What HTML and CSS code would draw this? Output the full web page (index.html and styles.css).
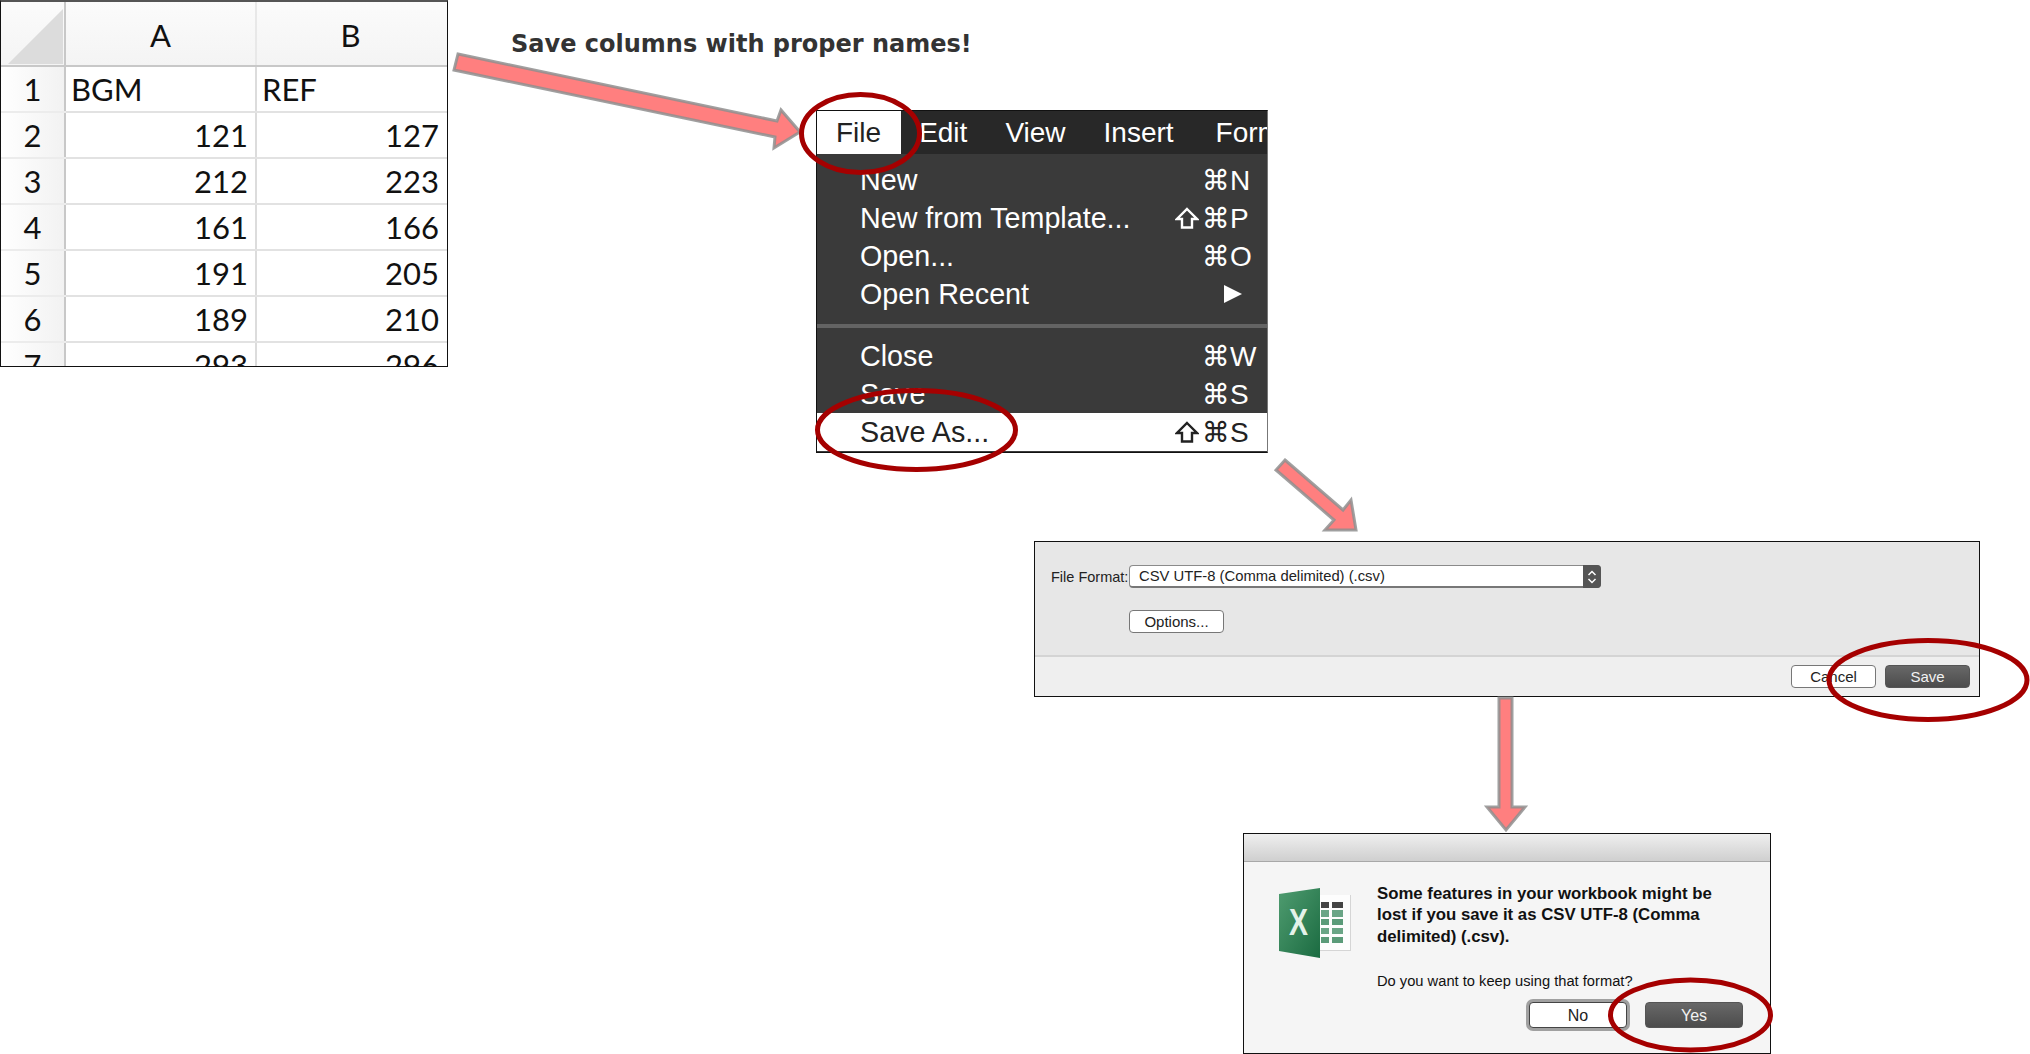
FILE: index.html
```html
<!DOCTYPE html>
<html lang="en">
<head>
    <meta charset="UTF-8">
    <meta name="viewport" content="width=device-width, initial-scale=1.0">
    <title>Save columns with proper names</title>
    <link rel="stylesheet" href="styles.css">
</head>

<body>
<div class="canvas">

    <!-- spreadsheet screenshot -->
    <div class="sheet">
        <table>
            <thead>
                <tr>
                    <th class="corner"><span class="corner-mark"></span></th>
                    <th>A</th>
                    <th>B</th>
                </tr>
            </thead>
            <tbody>
                <tr><th>1</th><td class="label">BGM</td><td class="label">REF</td></tr>
                <tr><th>2</th><td>121</td><td>127</td></tr>
                <tr><th>3</th><td>212</td><td>223</td></tr>
                <tr><th>4</th><td>161</td><td>166</td></tr>
                <tr><th>5</th><td>191</td><td>205</td></tr>
                <tr><th>6</th><td>189</td><td>210</td></tr>
                <tr><th>7</th><td>293</td><td>296</td></tr>
            </tbody>
        </table>
    </div>

    <p class="note">Save columns with proper names!</p>

    <!-- file menu screenshot -->
    <div class="menu">
        <div class="menu-bar">
            <span class="menu-tab active">File</span>
            <span class="menu-tab">Edit</span>
            <span class="menu-tab">View</span>
            <span class="menu-tab">Insert</span>
            <span class="menu-tab">Format</span>
        </div>
        <ul class="menu-list">
            <li class="menu-item"><span class="item-name">New</span><span class="item-keys">⌘N</span></li>
            <li class="menu-item">
                <span class="item-name">New from Template...</span>
                <svg class="item-shift" width="24" height="22" viewBox="0 0 24 22"><path d="M12 2 22 12H17V20.500H7V12H2Z"/></svg>
                <span class="item-keys">⌘P</span>
            </li>
            <li class="menu-item"><span class="item-name">Open...</span><span class="item-keys">⌘O</span></li>
            <li class="menu-item"><span class="item-name">Open Recent</span><span class="item-keys"><span class="item-arrow"></span></span></li>
            <li class="menu-sep"></li>
            <li class="menu-item"><span class="item-name">Close</span><span class="item-keys">⌘W</span></li>
            <li class="menu-item"><span class="item-name">Save</span><span class="item-keys">⌘S</span></li>
            <li class="menu-item selected">
                <span class="item-name">Save As...</span>
                <svg class="item-shift" width="24" height="22" viewBox="0 0 24 22"><path d="M12 2 22 12H17V20.500H7V12H2Z"/></svg>
                <span class="item-keys">⌘S</span>
            </li>
        </ul>
    </div>

    <!-- save dialog screenshot -->
    <div class="save-dialog">
        <div class="save-main">
            <div class="format-row">
                <span class="format-label">File Format:</span>
                <div class="format-select">
                    <span class="format-value">CSV UTF-8 (Comma delimited) (.csv)</span>
                    <span class="format-stepper">
                        <svg width="10" height="16" viewBox="0 0 10 16" fill="none" stroke="#fff" stroke-width="1.5">
                            <path d="M1.5 6 5 2.5 8.5 6"/>
                            <path d="M1.5 10 5 13.5 8.5 10"/>
                        </svg>
                    </span>
                </div>
            </div>
            <button class="btn options-btn">Options...</button>
        </div>
        <div class="save-footer">
            <button class="btn footer-btn">Cancel</button>
            <button class="btn btn-dark footer-btn">Save</button>
        </div>
    </div>

    <!-- csv warning screenshot -->
    <div class="alert">
        <div class="alert-title"></div>
        <div class="alert-body">
            <svg class="excel-icon" width="76" height="76" viewBox="0 0 76 76">
                <defs>
                    <linearGradient id="bookGreen" x1="0" y1="0" x2="1" y2="1">
                        <stop offset="0" stop-color="#4f9c70"/>
                        <stop offset="1" stop-color="#1b6b41"/>
                    </linearGradient>
                </defs>
                <rect x="41" y="9" width="31" height="56" fill="#d5d5d5"/>
                <rect x="41" y="9" width="30" height="55" fill="#fdfdfd"/>
                <rect x="42" y="16" width="8" height="6" fill="#444"/>
                <rect x="53" y="16" width="11" height="6" fill="#444"/>
                <rect x="42" y="24" width="8" height="7" fill="#6aa586"/>
                <rect x="53" y="24" width="11" height="7" fill="#6aa586"/>
                <rect x="42" y="33" width="8" height="6" fill="#5b9b79"/>
                <rect x="53" y="33" width="11" height="6" fill="#5b9b79"/>
                <rect x="42" y="42" width="8" height="6" fill="#6aa586"/>
                <rect x="53" y="42" width="11" height="6" fill="#6aa586"/>
                <rect x="42" y="51" width="8" height="6" fill="#5b9b79"/>
                <rect x="53" y="51" width="11" height="6" fill="#5b9b79"/>
                <polygon points="0,8 41,2 41,72 0,65" fill="url(#bookGreen)"/>
                <text class="excel-x" x="10" y="49" textLength="19" lengthAdjust="spacingAndGlyphs">X</text>
            </svg>
            <div class="alert-text">
                <p class="alert-head">Some features in your workbook might be lost if you save it as CSV UTF-8 (Comma delimited) (.csv).</p>
                <p class="alert-question">Do you want to keep using that format?</p>
                <div class="alert-buttons">
                    <button class="btn alert-btn btn-focus">No</button>
                    <button class="btn btn-dark alert-btn">Yes</button>
                </div>
            </div>
        </div>
    </div>

    <!-- red callouts drawn over the screenshots -->
    <svg class="marks" width="2030" height="1054" viewBox="0 0 2030 1054">
        <g class="arrow">
            <polygon points="458,54 777,121 781,110 800,132 774,148 775,137 454,70"/>
            <polygon points="1285,460 1343,510 1351,500 1356,530 1325,530 1334,520 1276,470"/>
            <polygon points="1499,698 1512,698 1512,807 1525,807 1506,830 1487,807 1499,807"/>
        </g>
        <g class="ring">
            <ellipse cx="860.500" cy="133.500" rx="59" ry="39"/>
            <ellipse cx="916.500" cy="430" rx="99" ry="39.500"/>
            <ellipse cx="1928" cy="680" rx="99" ry="39.500"/>
            <ellipse cx="1690.500" cy="1015" rx="80" ry="35"/>
        </g>
    </svg>

</div>
</body>
</html>
```

FILE: styles.css
```css
body {
    margin: 0;
    background: white;
    font-family: "Liberation Sans", "DejaVu Sans", sans-serif;
}

/* free canvas, each screenshot sits where it was pasted */
.canvas {
    position: relative;
    width: 2030px;
    height: 1054px;
    overflow: hidden;
}

/* spreadsheet */
.sheet {
    position: absolute;
    left: 0;
    top: 0;
    width: 448px;
    height: 367px;
    box-sizing: border-box;
    overflow: hidden;
    border: 1px solid #111;
    border-top: 2px solid #555;
    background: white;
}

.sheet table {
    width: 446px;
    table-layout: fixed;
    border-collapse: collapse;
    font-family: Lato, "Open Sans", sans-serif;
    font-size: 31px;
    color: #111;
}

.sheet th {
    font-weight: normal;
    padding: 0;
    text-align: center;
    background: linear-gradient(to right, #fff, #f2f2f2);
    border-right: 2px solid #c8c8c8;
    border-bottom: 2px solid #ececec;
}

.sheet th:first-child {
    width: 63px;
}

.sheet thead th {
    height: 60px;
    padding-top: 3px;
    background: linear-gradient(#fbfbfb, #f4f4f4);
    border-right: 2px solid #e8e8e8;
    border-bottom: 2px solid #c8c8c8;
}

.sheet thead th:last-child {
    padding-right: 3px;
    border-right: none;
}

.sheet thead th.corner {
    position: relative;
    border-right: 2px solid #c8c8c8;
}

.corner-mark {
    position: absolute;
    left: 7px;
    top: 7px;
    width: 55px;
    height: 55px;
    background: #dcdcdc;
    clip-path: polygon(100% 0, 100% 100%, 0 100%);
}

.sheet td {
    height: 44px;
    padding: 0 7px 0 5px;
    text-align: right;
    border-right: 2px solid #dcdcdc;
    border-bottom: 2px solid #e2e2e2;
}

.sheet td:last-child {
    padding-right: 8px;
    border-right: none;
}

.sheet td.label {
    text-align: left;
}

/* heading note */
.note {
    position: absolute;
    left: 511px;
    top: 29px;
    margin: 0;
    font-family: "DejaVu Sans", sans-serif;
    font-weight: bold;
    font-size: 24px;
    line-height: 30px;
    color: #333;
}

/* file menu */
.menu {
    position: absolute;
    left: 816px;
    top: 110px;
    width: 452px;
    height: 343px;
    box-sizing: border-box;
    overflow: hidden;
    border: 1px solid #111;
    border-right-color: #777;
    background: #3a3a3a;
    color: white;
    font-size: 28.700px;
}

.menu-bar {
    display: flex;
    height: 43px;
    background: #282828;
    white-space: nowrap;
    font-size: 28px;
}

.menu-tab {
    padding: 0 19px;
    line-height: 43px;
}

.menu-tab.active {
    background: white;
    color: #222;
    padding: 0 20px 0 19px;
    margin-right: -1px;
}

.menu-tab:last-child {
    margin-left: 4px;
}

.menu-list {
    list-style: none;
    margin: 0;
    padding: 7px 0 0;
}

.menu-item {
    display: flex;
    height: 38px;
    line-height: 39px;
    padding-left: 43px;
}

.menu-item.selected {
    background: white;
    color: #222;
}

.item-name {
    flex: 1;
}

.item-shift {
    flex: none;
    margin: 8px 3px 0 0;
    fill: none;
    stroke: currentColor;
    stroke-width: 2.4;
}

.item-keys {
    width: 65px;
    white-space: nowrap;
    font-size: 28px;
}

.item-arrow {
    display: block;
    width: 0;
    height: 0;
    margin: 10px 0 0 22px;
    border-left: 18px solid white;
    border-top: 9px solid transparent;
    border-bottom: 9px solid transparent;
}

.menu-sep {
    height: 4px;
    margin: 11px 0 9px;
    background: #636363;
}

/* shared buttons */
.btn {
    display: block;
    box-sizing: border-box;
    padding: 0;
    height: 23px;
    background: white;
    border: 1px solid #777;
    border-radius: 4px;
    font-family: "Liberation Sans", sans-serif;
    font-size: 15px;
    color: #222;
}

.btn-dark {
    background: linear-gradient(#686868, #4c4c4c);
    border-color: #555;
    color: #f2f2f2;
}

/* save dialog */
.save-dialog {
    position: absolute;
    left: 1034px;
    top: 541px;
    width: 946px;
    height: 156px;
    box-sizing: border-box;
    display: flex;
    flex-direction: column;
    border: 1px solid #111;
    color: #222;
}

.save-main {
    flex: 1;
    padding: 23px 0 0 16px;
    background: #e7e7e7;
}

.format-row {
    display: flex;
    align-items: center;
}

.format-label {
    width: 78px;
    font-size: 14.500px;
}

.format-select {
    display: flex;
    width: 472px;
    height: 23px;
    box-sizing: border-box;
    background: white;
    border: 1px solid #8a8a8a;
    border-bottom: 2px solid #777;
    border-radius: 4px;
}

.format-value {
    flex: 1;
    padding-left: 9px;
    font-size: 14.800px;
    line-height: 20px;
}

.format-stepper {
    display: flex;
    align-items: center;
    justify-content: center;
    width: 18px;
    margin: -1px -1px -2px 0;
    background: #555;
    border-radius: 0 4px 4px 0;
}

.options-btn {
    width: 95px;
    margin: 22px 0 0 78px;
}

.save-footer {
    display: flex;
    justify-content: flex-end;
    gap: 9px;
    height: 41px;
    box-sizing: border-box;
    padding: 8px 9px 0 0;
    background: #efefef;
    border-top: 2px solid #d4d4d4;
}

.footer-btn {
    width: 85px;
}

/* csv warning */
.alert {
    position: absolute;
    left: 1243px;
    top: 833px;
    width: 528px;
    height: 221px;
    box-sizing: border-box;
    display: flex;
    flex-direction: column;
    border: 1px solid #111;
    background: #f5f5f5;
    color: #111;
}

.alert-title {
    height: 27px;
    background: linear-gradient(#efefef, #cfcfcf);
    border-bottom: 1px solid #a8a8a8;
}

.alert-body {
    display: flex;
    padding: 21px 0 0 35px;
}

.excel-icon {
    margin: 3px 22px 0 0;
    flex: none;
}

.excel-x {
    font-family: "Liberation Sans", sans-serif;
    font-weight: bold;
    font-size: 36px;
    fill: #e4f2e9;
}

.alert-text {
    width: 366px;
}

.alert-head {
    width: 355px;
    margin: 0;
    font-weight: bold;
    font-size: 16.800px;
    line-height: 21.400px;
}

.alert-question {
    margin: 24px 0 0;
    font-size: 14.700px;
    line-height: 20px;
}

.alert-buttons {
    display: flex;
    justify-content: flex-end;
    gap: 18px;
    margin: 11px 0 0;
}

.alert-btn {
    width: 98px;
    height: 26px;
    padding-top: 1px;
    font-size: 16px;
}

.btn-focus {
    border-color: #444;
    box-shadow: 0 0 0 3px #a0a0a0;
}

/* callouts */
.marks {
    position: absolute;
    left: 0;
    top: 0;
    pointer-events: none;
}

.arrow polygon {
    fill: #ff7f7f;
    stroke: #8f8f8f;
    stroke-width: 3;
    stroke-opacity: 0.85;
}

.ring ellipse {
    fill: none;
    stroke: #a50000;
    stroke-width: 5;
}
```
